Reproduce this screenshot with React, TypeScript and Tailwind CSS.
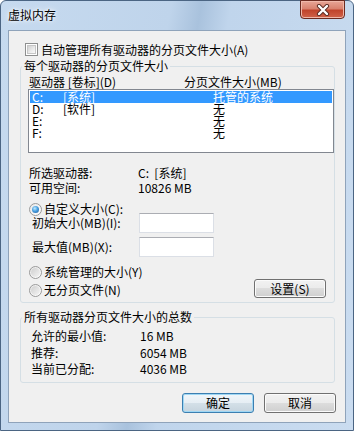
import React from "react";

function Check() {
  return (
    <span className="flex h-[13px] w-[13px] shrink-0 items-center justify-center border border-[#8e8f8f] bg-white">
      <span className="h-[9px] w-[9px] border border-[#c6c6c6] bg-[linear-gradient(135deg,#d0d0d0_0%,#ececec_60%,#fafafa_100%)]" />
    </span>
  );
}

function Radio({ checked }: { checked?: boolean }) {
  return (
    <span className="flex h-[13px] w-[13px] shrink-0 items-center justify-center rounded-full border border-[#9a9a9a] bg-[linear-gradient(135deg,#e8e8e8,#ffffff)]">
      {checked ? (
        <span className="h-[7px] w-[7px] rounded-full bg-[radial-gradient(circle_at_40%_35%,#c4ecff_0%,#4aa0e0_45%,#1a5596_100%)]" />
      ) : (
        <span className="h-[9px] w-[9px] rounded-full bg-[linear-gradient(135deg,#cfcfcf,#f4f4f4)]" />
      )}
    </span>
  );
}

function Btn({ children, def }: { children: React.ReactNode; def?: boolean }) {
  return (
    <div
      className={
        def
          ? "flex h-[20px] w-[72px] items-center justify-center rounded-[3px] border border-[#3c7fb1] bg-[linear-gradient(#f0f6fa_0%,#e6eef4_49%,#d4e0e8_50%,#c6d4de_100%)] shadow-[inset_0_0_0_1px_#9fd7f4]"
          : "flex h-[20px] w-[72px] items-center justify-center rounded-[3px] border border-[#707070] bg-[linear-gradient(#f2f2f2_0%,#ebebeb_49%,#dddddd_50%,#cfcfcf_100%)] shadow-[inset_0_0_0_1px_#fbfbfb]"
      }
    >
      {children}
    </div>
  );
}

function Input() {
  return <div className="h-[20px] w-[75px] border border-[#dbdfe6] border-t-[#abadb3] bg-white" />;
}

export default function App() {
  return (
    <div className="h-[431px] w-[354px] overflow-hidden bg-white font-['Noto_Sans_CJK_SC','Noto_Sans',sans-serif] text-[12px] leading-[12px] text-black">
      <div className="flex h-[431px] w-[354px] flex-col rounded-t-[6px] border border-[#4b6583] bg-[linear-gradient(100deg,#c6daef_0%,#bfd4eb_40%,#a9c2dd_47%,#c0d5ec_54%,#cadcf0_100%)]">
        {/* title bar */}
        <div className="flex h-[29px] shrink-0 items-start">
          <div className="pl-[7px] pt-[8px] text-[12px] leading-[12px] [text-shadow:0_0_6px_#ffffff,0_0_3px_#ffffff]">
            虚拟内存
          </div>
          <div className="ml-auto mr-[8px] -mt-[1px] flex h-[19px] w-[45px] items-center justify-center rounded-b-[4px] border border-[#6b2a20] bg-[linear-gradient(#e8a697_0%,#d9826f_45%,#c0442c_55%,#d0634a_100%)] shadow-[inset_0_0_0_1px_#f0b8aa]">
            <svg width="14" height="12" viewBox="0 0 14 12">
              <path d="M3 2 L11 10 M11 2 L3 10" stroke="#5a2a22" strokeWidth="4.2" strokeLinecap="round" />
              <path d="M3 2 L11 10 M11 2 L3 10" stroke="#ffffff" strokeWidth="2.4" strokeLinecap="round" />
            </svg>
          </div>
        </div>

        {/* client area */}
        <div className="ml-[7px] flex h-[393px] w-[338px] shrink-0 flex-col border border-[#8fa3ba] bg-[#f0f0f0]">
          <div className="ml-[16px] mt-[12px] flex h-[13px] items-center gap-[3px]">
            <Check />
            <span>自动管理所有驱动器的分页文件大小(A)</span>
          </div>

          <fieldset className="ml-[11px] mt-[4px] h-[243px] w-[315px] rounded-[3px] border border-[#d5dfe5]">
            <legend className="ml-[1px] px-[2px] leading-[12px]">每个驱动器的分页文件大小</legend>
            <div className="mt-[4px] grid h-[12px] grid-cols-[155px_1fr] pl-[8px]">
              <span>驱动器 [卷标](D)</span>
              <span>分页文件大小(MB)</span>
            </div>
            <div className="ml-[7px] mt-[1px] h-[64px] w-[306px] border border-[#828790] bg-white pt-[1px]">
              <div className="mx-[1px] grid h-[12px] grid-cols-[31px_150px_1fr] bg-[#3399ff] pl-[2px] text-white">
                <span>C:</span>
                <span>[系统]</span>
                <span>托管的系统</span>
              </div>
              <div className="mx-[1px] grid h-[12px] grid-cols-[31px_150px_1fr] pl-[2px]">
                <span>D:</span>
                <span>[软件]</span>
                <span>无</span>
              </div>
              <div className="mx-[1px] grid h-[12px] grid-cols-[31px_150px_1fr] pl-[2px]">
                <span>E:</span>
                <span></span>
                <span>无</span>
              </div>
              <div className="mx-[1px] grid h-[12px] grid-cols-[31px_150px_1fr] pl-[2px]">
                <span>F:</span>
                <span></span>
                <span>无</span>
              </div>
            </div>

            <div className="mt-[14px] flex h-[12px] pl-[8px]">
              <span className="w-[109px]">所选驱动器:</span>
              <span>C:&nbsp;&nbsp;[系统]</span>
            </div>
            <div className="mt-[3px] flex h-[12px] pl-[8px]">
              <span className="w-[109px]">可用空间:</span>
              <span>10826 MB</span>
            </div>

            <div className="ml-[8px] mt-[9px] flex h-[12px] items-center gap-[2px]">
              <Radio checked />
              <span>自定义大小(C):</span>
            </div>
            <div className="-mt-[2px] flex h-[20px] items-center pl-[11px]">
              <span className="w-[107px]">初始大小(MB)(I):</span>
              <Input />
            </div>
            <div className="mt-[4px] flex h-[20px] items-center pl-[11px]">
              <span className="w-[107px]">最大值(MB)(X):</span>
              <Input />
            </div>

            <div className="ml-[8px] mt-[9px] flex h-[12px] items-center gap-[2px]">
              <Radio />
              <span>系统管理的大小(Y)</span>
            </div>
            <div className="mt-[1px] flex items-start pl-[8px] pr-[8px]">
              <div className="mt-[5px] flex h-[12px] items-center gap-[2px]">
                <Radio />
                <span>无分页文件(N)</span>
              </div>
              <div className="ml-auto">
                <div className="flex h-[19px] w-[72px] items-center justify-center rounded-[3px] border border-[#707070] bg-[linear-gradient(#f2f2f2_0%,#ebebeb_49%,#dddddd_50%,#cfcfcf_100%)] shadow-[inset_0_0_0_1px_#fbfbfb]">
                  设置(S)
                </div>
              </div>
            </div>
          </fieldset>

          <fieldset className="ml-[11px] mt-[8px] h-[72px] w-[315px] rounded-[3px] border border-[#d5dfe5]">
            <legend className="ml-[1px] px-[2px] leading-[12px]">所有驱动器分页文件大小的总数</legend>
            <div className="mt-[7px] flex h-[12px] pl-[10px]">
              <span className="w-[109px]">允许的最小值:</span>
              <span>16 MB</span>
            </div>
            <div className="mt-[5px] flex h-[12px] pl-[10px]">
              <span className="w-[109px]">推荐:</span>
              <span>6054 MB</span>
            </div>
            <div className="mt-[4px] flex h-[12px] pl-[10px]">
              <span className="w-[109px]">当前已分配:</span>
              <span>4036 MB</span>
            </div>
          </fieldset>

          <div className="mr-[9px] mt-[10px] flex justify-end gap-[10px]">
            <Btn def>确定</Btn>
            <Btn>取消</Btn>
          </div>
        </div>
      </div>
    </div>
  );
}
